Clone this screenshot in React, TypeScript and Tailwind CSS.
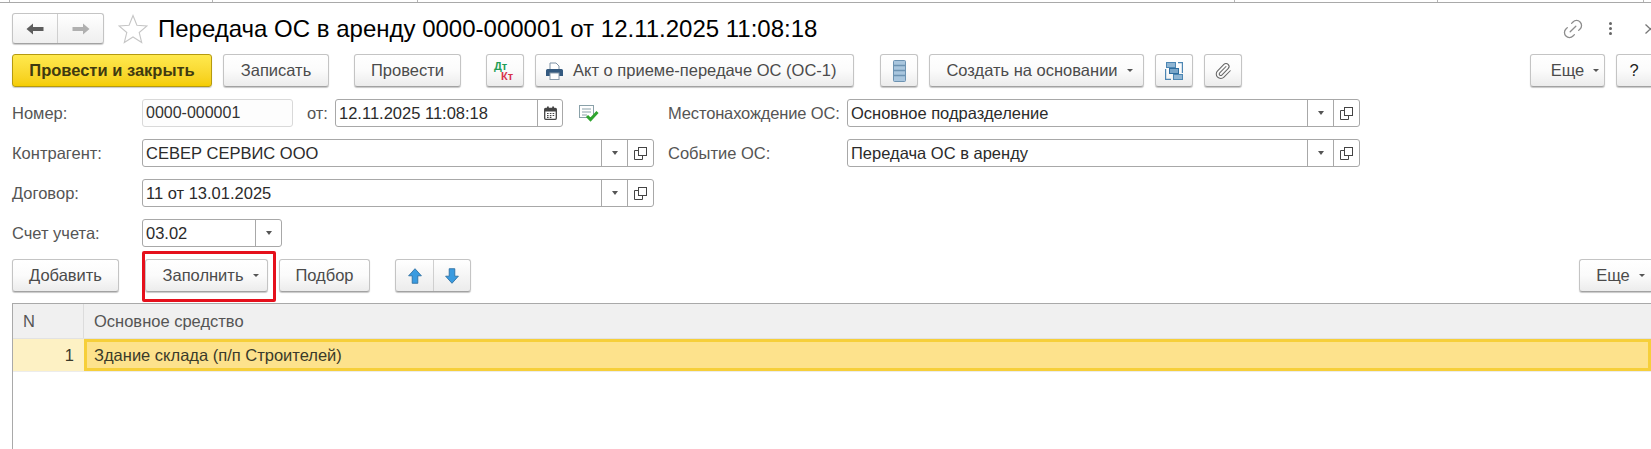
import React from "react";
import { Link2, Paperclip } from "lucide-react";

function Btn({ className = "", children }: { className?: string; children?: React.ReactNode }) {
  return (
    <div className={"flex h-[33px] shrink-0 items-center justify-center rounded-[3px] border border-[#c4c4c4] border-b-[#a2a2a2] bg-gradient-to-b from-white via-[#fbfbfb] to-[#ececec] text-[16.5px] text-[#4b4b4b] shadow-[0_1px_1px_rgba(0,0,0,0.22)] " + className}>
      {children}
    </div>
  );
}

function Caret() {
  return <span className="ml-[9px] h-0 w-0 border-x-[3px] border-t-[3px] border-x-transparent border-t-[#555]" />;
}

function OpenIcon() {
  return (
    <svg width="13" height="13" viewBox="0 0 13 13" fill="none" stroke="#444" strokeWidth="1">
      <rect x="4.5" y="0.5" width="8" height="8" />
      <path d="M4.5 3.5H0.5V12.5H8.5V8.5" />
    </svg>
  );
}

function Field({ className = "", text, drop = false, open = false, cal = false }: { className?: string; text: string; drop?: boolean; open?: boolean; cal?: boolean }) {
  return (
    <div className={"flex h-[28px] shrink-0 items-stretch rounded-[3px] border border-[#a8a8a8] bg-white text-[16.5px] text-[#2b2b2b] " + className}>
      <div className="flex min-w-0 flex-1 items-center whitespace-nowrap pl-[3px]">{text}</div>
      {drop && (
        <div className="flex w-[26px] items-center justify-center border-l border-[#a8a8a8]">
          <span className="h-0 w-0 border-x-[3.5px] border-t-[4px] border-x-transparent border-t-[#555]" />
        </div>
      )}
      {open && (
        <div className="flex w-[26px] items-center justify-center border-l border-[#a8a8a8]">
          <OpenIcon />
        </div>
      )}
      {cal && (
        <div className="flex w-[25px] items-center justify-center border-l border-[#a8a8a8]">
          <svg width="13" height="14" viewBox="0 0 13 14">
            <rect x="0.7" y="2.5" width="11.6" height="10.8" rx="1" fill="#fff" stroke="#444" strokeWidth="1.3" />
            <rect x="0.7" y="2.5" width="11.6" height="3" fill="#444" />
            <rect x="3" y="0.5" width="1.8" height="3.5" fill="#444" />
            <rect x="8.2" y="0.5" width="1.8" height="3.5" fill="#444" />
            <path d="M3 7.5h1.6M5.8 7.5h1.6M8.6 7.5h1.6M3 9.5h1.6M5.8 9.5h1.6M8.6 9.5h1.6M3 11.4h1.6M5.8 11.4h1.6" stroke="#444" strokeWidth="1.2" />
          </svg>
        </div>
      )}
    </div>
  );
}

function Label({ className = "", children }: { className?: string; children: React.ReactNode }) {
  return <div className={"shrink-0 whitespace-nowrap text-[16.5px] text-[#555] " + className}>{children}</div>;
}

export default function App() {
  return (
    <div className="h-[449px] w-[1651px] overflow-hidden bg-white font-['Liberation_Sans',Arial,sans-serif]">
      {/* tab strip remnant */}
      <div className="flex h-[3px] border-b border-[#a9a9a9]">
        <div className="w-[10px] shrink-0 border-r border-[#b5b5b5]" />
        <div className="w-[203px] shrink-0 border-r border-[#b5b5b5]" />
        <div className="w-[205px] shrink-0 border-r border-[#b5b5b5]" />
        <div className="w-[817px] shrink-0 border-r border-[#b5b5b5]" />
        <div className="w-[203px] shrink-0 border-r border-[#b5b5b5]" />
        <div className="w-[206px] shrink-0 border-r border-[#b5b5b5]" />
      </div>

      {/* title */}
      <div className="mt-[10px] flex h-[31px] items-center pl-[12px]">
        <div className="flex h-[31px] w-[92px] shrink-0 rounded-[3px] border border-[#c4c4c4] border-b-[#a2a2a2] bg-gradient-to-b from-white to-[#efefef] shadow-[0_1px_1px_rgba(0,0,0,0.2)]">
          <div className="flex w-[45px] items-center justify-center border-r border-[#cfcfcf]">
            <svg width="18" height="12" viewBox="0 0 18 12"><path d="M0.5 6L7 0.5V4H17.5V8H7V11.5Z" fill="#5d5d5d" /></svg>
          </div>
          <div className="flex flex-1 items-center justify-center">
            <svg width="18" height="12" viewBox="0 0 18 12"><path d="M17.5 6L11 0.5V4H0.5V8H11V11.5Z" fill="#b0b0b0" /></svg>
          </div>
        </div>
        <svg className="ml-[14px] shrink-0" width="30" height="30" viewBox="0 0 30 30" fill="none" stroke="#c6c6c6" strokeWidth="1.1">
          <path d="M15 1.5L18.9 11.2L29 11.9L21.2 18.5L23.7 28.5L15 23L6.3 28.5L8.8 18.5L1 11.9L11.1 11.2Z" />
        </svg>
        <div className="ml-[10px] shrink-0 whitespace-nowrap text-[24px] text-black">Передача ОС в аренду 0000-000001 от 12.11.2025 11:08:18</div>
        <div className="flex-1" />
        <Link2 className="mr-[24px] shrink-0 -rotate-45 text-[#8d8d8d]" size={24} strokeWidth={1.3} />
        <div className="mr-[33px] flex shrink-0 flex-col gap-[2px]">
          <span className="h-[3px] w-[3px] rounded-full bg-[#666]" />
          <span className="h-[3px] w-[3px] rounded-full bg-[#666]" />
          <span className="h-[3px] w-[3px] rounded-full bg-[#666]" />
        </div>
        <svg className="shrink-0" width="6" height="12" viewBox="0 0 6 12" fill="none" stroke="#777" strokeWidth="1.3">
          <path d="M0.5 1.5L10 10.5M0.5 10.5L10 1.5" />
        </svg>
      </div>

      {/* command bar */}
      <div className="mt-[10px] flex items-center pl-[12px]">
        <div className="flex h-[33px] w-[200px] shrink-0 items-center justify-center rounded-[3px] border border-[#b59a10] bg-gradient-to-b from-[#ffe94d] to-[#f5cd00] text-[16.5px] font-bold text-[#3f3a10] shadow-[0_1px_1px_rgba(0,0,0,0.22)]">Провести и закрыть</div>
        <Btn className="ml-[11px] w-[106px]">Записать</Btn>
        <Btn className="ml-[25px] w-[107px]">Провести</Btn>
        <Btn className="ml-[25px] w-[38px]">
          <div className="flex w-[22px] flex-col text-[11px] font-bold leading-[10px]">
            <span className="text-[#1f9d55]">Дт</span>
            <span className="pl-[7px] text-[#d8324a]">Кт</span>
          </div>
        </Btn>
        <Btn className="ml-[11px] w-[319px] justify-start pl-[9px]">
          <svg className="mr-[9px] shrink-0" width="19" height="18" viewBox="0 0 19 18">
            <path d="M5 1h6l3 3v4H5z" fill="#fff" stroke="#7f92a5" />
            <path d="M1 8.5a1.5 1.5 0 0 1 1.5-1.5h14A1.5 1.5 0 0 1 18 8.5V14H1z" fill="#33597f" />
            <rect x="5" y="11" width="9" height="6.5" fill="#fff" stroke="#8a9bab" />
          </svg>
          Акт о приеме-передаче ОС (ОС-1)
        </Btn>
        <Btn className="ml-[26px] w-[38px]">
          <svg width="13" height="22" viewBox="0 0 13 22">
            <rect x="0.5" y="0.5" width="12" height="21" rx="1" fill="#a9c6de" stroke="#6d93b2" />
            <path d="M1 5.5h11M1 10.5h11M1 15.5h11" stroke="#6d93b2" strokeWidth="1.3" />
          </svg>
        </Btn>
        <Btn className="ml-[11px] w-[215px] pl-[6px]">
          Создать на основании
          <Caret />
        </Btn>
        <Btn className="ml-[11px] w-[38px]">
          <svg width="18" height="18" viewBox="0 0 18 18" fill="none">
            <path d="M0.6 7V17.4H6M13 0.6H17.4V11" stroke="#4d86b3" strokeWidth="1.2" />
            <rect x="1.5" y="0.5" width="9" height="5" fill="#8fb5d3" stroke="#4d86b3" />
            <rect x="4.5" y="6.5" width="9" height="5" fill="#7aa6c9" stroke="#2f6d9e" />
            <rect x="8.5" y="12.5" width="9" height="5" fill="#8fb5d3" stroke="#4d86b3" />
          </svg>
        </Btn>
        <Btn className="ml-[11px] w-[38px]">
          <Paperclip className="text-[#666]" size={18} strokeWidth={1.4} />
        </Btn>
        <div className="flex-1" />
        <Btn className="w-[75px] pl-[15px]">
          Еще
          <Caret />
        </Btn>
        <Btn className="ml-[11px] w-[35px] rounded-r-none border-r-0 text-[#222]">?</Btn>
      </div>

      {/* form rows */}
      <div className="mt-[12px] flex items-center pl-[12px]">
        <Label className="w-[130px]">Номер:</Label>
        <div className="flex h-[28px] w-[151px] shrink-0 items-center rounded-[3px] border border-[#d9d9d9] bg-[#fdfdfd] pl-[3px] text-[16px] text-[#333]">0000-000001</div>
        <Label className="ml-[14px] w-[28px]">от:</Label>
        <Field className="w-[228px]" text="12.11.2025 11:08:18" cal />
        <svg className="ml-[16px] shrink-0" width="20" height="18" viewBox="0 0 20 18" fill="none">
          <rect x="0.5" y="1.5" width="14" height="12" fill="#fff" stroke="#8aa1a9" />
          <path d="M3 5h9M3 8h9M3 11h5" stroke="#8aa1a9" />
          <path d="M8 12l3.5 3.5L18.5 8" stroke="#2fa52f" strokeWidth="3" />
        </svg>
        <Label className="ml-[69px] w-[179px] tracking-[-0.15px]">Местонахождение ОС:</Label>
        <Field className="w-[513px]" text="Основное подразделение" drop open />
      </div>

      <div className="mt-[12px] flex items-center pl-[12px]">
        <Label className="w-[130px]">Контрагент:</Label>
        <Field className="w-[512px]" text="СЕВЕР СЕРВИС ООО" drop open />
        <Label className="ml-[14px] w-[179px]">Событие ОС:</Label>
        <Field className="w-[513px]" text="Передача ОС в аренду" drop open />
      </div>

      <div className="mt-[12px] flex items-center pl-[12px]">
        <Label className="w-[130px]">Договор:</Label>
        <Field className="w-[512px]" text="11 от 13.01.2025" drop open />
      </div>

      <div className="mt-[12px] flex items-center pl-[12px]">
        <Label className="w-[130px]">Счет учета:</Label>
        <Field className="w-[140px]" text="03.02" drop />
      </div>

      {/* table bar */}
      <div className="relative mt-[12px] flex items-center pl-[12px]">
        <Btn className="w-[107px]">Добавить</Btn>
        <Btn className="ml-[26px] w-[123px] pl-[8px]">
          Заполнить
          <Caret />
        </Btn>
        <Btn className="ml-[11px] w-[91px]">Подбор</Btn>
        <div className="ml-[25px] flex h-[33px] w-[76px] shrink-0 rounded-[3px] border border-[#c4c4c4] border-b-[#a2a2a2] bg-gradient-to-b from-white to-[#ececec] shadow-[0_1px_1px_rgba(0,0,0,0.22)]">
          <div className="flex w-[38px] items-center justify-center border-r border-[#cfcfcf]">
            <svg width="14" height="16" viewBox="0 0 14 16"><path d="M7 0.7L13.4 7.8H9.8V15.3H4.2V7.8H0.6Z" fill="#3a9be0" stroke="#25689c" strokeWidth="0.8" /></svg>
          </div>
          <div className="flex flex-1 items-center justify-center">
            <svg width="14" height="16" viewBox="0 0 14 16"><path d="M7 15.3L13.4 8.2H9.8V0.7H4.2V8.2H0.6Z" fill="#3a9be0" stroke="#25689c" strokeWidth="0.8" /></svg>
          </div>
        </div>
        <div className="flex-1" />
        <Btn className="w-[72px] rounded-r-none border-r-0 pl-[10px]">
          Еще
          <Caret />
        </Btn>
        <div className="pointer-events-none absolute left-[142px] top-[-8px] h-[51px] w-[134px] rounded-[2px] border-[3px] border-[#e5101c]" />
      </div>

      {/* table */}
      <div className="ml-[12px] mt-[11px] h-[200px] border-l border-t border-[#a9a9a9]">
        <div className="flex h-[35px] border-b border-[#e2e2e2] bg-[#f0f0f0] text-[16.5px] text-[#555]">
          <div className="flex w-[71px] items-center border-r border-[#dcdcdc] pl-[10px]">N</div>
          <div className="flex flex-1 items-center pl-[10px]">Основное средство</div>
        </div>
        <div className="flex h-[33px] border-b border-[#ececec] text-[16.5px] text-[#3a3a2a]">
          <div className="flex w-[71px] items-center justify-end bg-[#fdf1c4] pr-[10px]">1</div>
          <div className="flex flex-1 items-center border-[3px] border-[#f6cf3a] bg-[#fde28c] pl-[7px]">Здание склада (п/п Строителей)</div>
        </div>
      </div>
    </div>
  );
}
